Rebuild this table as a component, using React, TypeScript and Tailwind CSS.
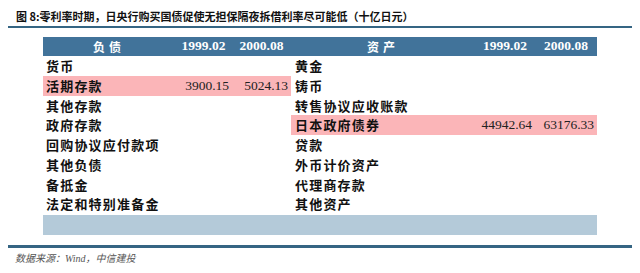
import React from "react";

type Row = {
  left: string;
  l1?: string;
  l2?: string;
  right: string;
  r1?: string;
  r2?: string;
  leftPink?: boolean;
  rightPink?: boolean;
};

const rows: Row[] = [
  { left: "货币", right: "黄金" },
  { left: "活期存款", l1: "3900.15", l2: "5024.13", right: "铸币", leftPink: true },
  { left: "其他存款", right: "转售协议应收账款" },
  { left: "政府存款", right: "日本政府债券", r1: "44942.64", r2: "63176.33", rightPink: true },
  { left: "回购协议应付款项", right: "贷款" },
  { left: "其他负债", right: "外币计价资产" },
  { left: "备抵金", right: "代理商存款" },
  { left: "法定和特别准备金", right: "其他资产" },
];

function Label({ text, pink, pad }: { text: string; pink?: boolean; pad: string }) {
  return (
    <div
      className={`flex h-[19.75px] items-center ${pad} font-['Noto_Sans_CJK_SC','Noto_Sans',sans-serif] text-[13px] font-bold tracking-[1.2px] text-[#111] ${
        pink ? "bg-[#fbb5b8]" : ""
      }`}
    >
      {text}
    </div>
  );
}

function Num({ value, pink }: { value?: string; pink?: boolean }) {
  return (
    <div
      className={`flex h-[19.75px] items-center justify-end pr-[3px] font-['Liberation_Serif',serif] text-[13.5px] text-[#222] ${
        pink ? "bg-[#fbb5b8]" : ""
      }`}
    >
      {value}
    </div>
  );
}

function HeadCell({ text, cjk }: { text: string; cjk?: boolean }) {
  return (
    <div
      className={
        cjk
          ? "flex h-[19px] items-center justify-center bg-[#41739a] font-['Noto_Sans_CJK_SC',sans-serif] text-[12px] font-bold tracking-[4px] text-white"
          : "flex h-[19px] items-center justify-center bg-[#41739a] font-['Liberation_Serif',serif] text-[13.5px] font-bold text-white"
      }
    >
      {text}
    </div>
  );
}

export default function App() {
  return (
    <div className="h-[273px] w-[640px] overflow-hidden bg-white">
      <div className="flex h-[26px] items-center pl-[16px] pt-[6px] font-['Noto_Sans_CJK_SC','Noto_Sans',sans-serif] text-[11px] font-bold text-[#111]">
        图 8:零利率时期，日央行购买国债促使无担保隔夜拆借利率尽可能低（十亿日元）
      </div>
      <div className="mx-[8px] h-[2px] bg-[#356583]" />

      <div className="ml-[43px] mt-[9px] w-[554px]">
        <div className="grid grid-cols-[132px_57px_59px_184px_60px_62px]">
          <HeadCell text="负债" cjk />
          <HeadCell text="1999.02" />
          <HeadCell text="2000.08" />
          <HeadCell text="资产" cjk />
          <HeadCell text="1999.02" />
          <HeadCell text="2000.08" />

          {rows.map((r) => (
            <React.Fragment key={r.left}>
              <Label text={r.left} pink={r.leftPink} pad="pl-[3px]" />
              <Num value={r.l1} pink={r.leftPink} />
              <Num value={r.l2} pink={r.leftPink} />
              <Label text={r.right} pink={r.rightPink} pad="pl-[4px]" />
              <Num value={r.r1} pink={r.rightPink} />
              <Num value={r.r2} pink={r.rightPink} />
            </React.Fragment>
          ))}
        </div>
        <div className="mt-[1px] h-[20px] bg-[#b4cad9]" />
      </div>

      <div className="mx-[8px] mt-[10px] h-[2.5px] bg-[#356583]" />
      <div className="pl-[15px] pt-[4px] font-['Liberation_Serif','Noto_Sans_CJK_SC',serif] text-[10px] italic leading-[14px] text-[#555]">
        数据来源：Wind，中信建投
      </div>
    </div>
  );
}
